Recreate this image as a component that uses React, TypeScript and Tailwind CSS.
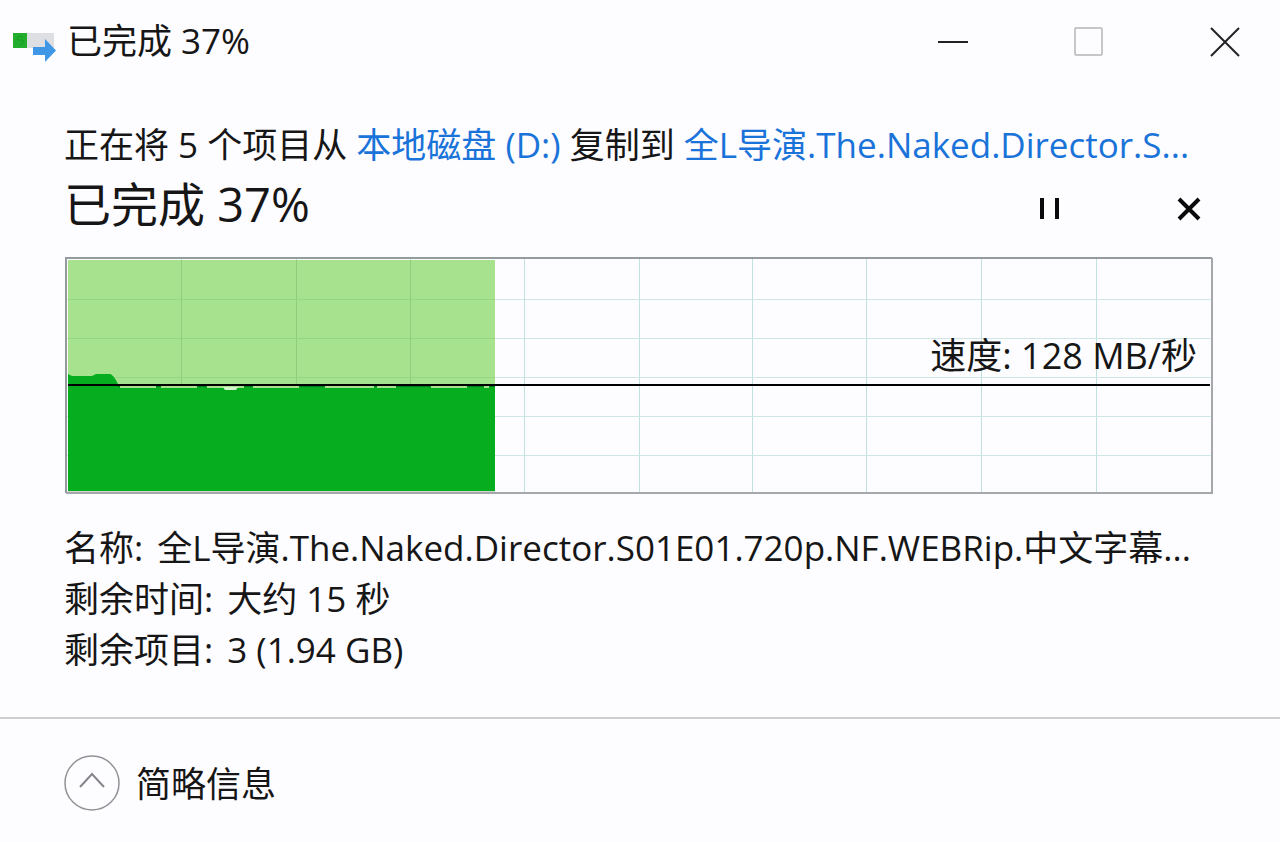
import type { ReactNode } from "react";

const VERTICALS = [117, 232, 346, 460, 575, 688, 802, 917, 1032];
const HORIZONTALS = [42, 81, 120, 159, 198];

// Stretches where the throughput dipped just below the average line.
const DIPS = [
  [55, 91],
  [96, 132],
  [142, 179],
  [188, 234],
  [260, 309],
  [312, 331],
  [366, 402],
  [419, 424],
];

function CopyIcon() {
  return (
    <svg className="h-10 w-11 shrink-0" viewBox="0 0 44 40" aria-hidden="true">
      <rect x="1" y="11" width="41" height="15" fill="#dddfe2" />
      <rect x="1" y="11" width="14" height="15" fill="#22ad2c" />
      <path d="M11 15l-4-1-2 3 2 1h4v3l-3 2" fill="none" stroke="#149a22" />
      <path d="M21 25h12v-8l11 11.500L33 40v-7H21z" fill="#3f97e6" />
    </svg>
  );
}

function SpeedChart() {
  return (
    <div className="relative h-[237px]">
      <svg
        className="block h-full w-full"
        viewBox="0 0 1148 237"
        preserveAspectRatio="none"
        role="img"
        aria-label="速度: 128 MB/秒"
      >
        {VERTICALS.map((x) => (
          <rect key={x} x={x - 1} y="2" width="1" height="233" fill="#c3e0e1" />
        ))}
        {HORIZONTALS.map((y) => (
          <rect key={y} x="2" y={y} width="1144" height="1" fill="#cfe6e6" />
        ))}
        <rect x="3" y="3" width="427" height="231" fill="#a7e28f" />
        {VERTICALS.slice(0, 3).map((x) => (
          <rect key={x} x={x - 1} y="3" width="1" height="124" fill="#8fcc7c" />
        ))}
        {HORIZONTALS.slice(0, 3).map((y) => (
          <rect key={y} x="3" y={y} width="427" height="1" fill="#96d582" />
        ))}
        <path d="M3 117l4 2h20l4-2h14q3 0 8 10v2h377v105H3z" fill="#06ad1e" />
        <rect x="53" y="129" width="377" height="1" fill="#057a1a" />
        {DIPS.map(([from, to]) => (
          <rect key={from} x={from} y="129" width={to - from} height="2" fill="#a7e28f" />
        ))}
        <path d="M158 130h15l-2 3h-11z" fill="#d6f4cb" />
        <rect x="3" y="127" width="1142" height="2" fill="#000" />
        <rect x="2" y="234" width="428" height="2" fill="#d0d5d0" />
        <path d="M1 236V1H1147" fill="none" stroke="#949b9e" strokeWidth="2" />
        <path d="M1 236H1147V1" fill="none" stroke="#a5a8aa" strokeWidth="2" />
      </svg>
      <p className="absolute right-4 bottom-[113px] text-[36px]">速度: 128 MB/秒</p>
    </div>
  );
}

function Detail({ label, children }: { label: string; children: ReactNode }) {
  return (
    <div className="flex gap-[14px]">
      <dt className="shrink-0">{label}:</dt>
      <dd className="min-w-0 truncate">{children}</dd>
    </div>
  );
}

export default function App() {
  return (
    <main className="min-h-screen bg-[#fdfcff] font-['Open_Sans','Noto_Sans_CJK_SC',sans-serif] text-[35px] leading-[51px] text-[#161616]">
      <header className="flex h-[84px] items-center pr-10 pl-3">
        <CopyIcon />
        <h1 className="ml-[11px] flex-1 pb-1">已完成 37%</h1>
        <div className="flex gap-[106px]">
          <button type="button" aria-label="最小化">
            <svg className="h-[30px] w-[30px]" viewBox="0 0 30 30">
              <path d="M0 15h30" stroke="#222" strokeWidth="2" />
            </svg>
          </button>
          <button type="button" aria-label="最大化">
            <svg className="h-[30px] w-[30px]" viewBox="0 0 30 30" fill="none">
              <rect x="1" y="1" width="27" height="27" rx="1" stroke="#b5b5b8" strokeWidth="1.500" />
            </svg>
          </button>
          <button type="button" aria-label="关闭">
            <svg className="h-[30px] w-[30px]" viewBox="0 0 30 30">
              <path d="M1 1l28 28M29 1L1 29" stroke="#222" strokeWidth="2" />
            </svg>
          </button>
        </div>
      </header>

      <section className="pt-[35px] pr-[67px] pl-16">
        <p className="truncate">
          正在将 5 个项目从{" "}
          <a href="#source" className="text-[#1a73d9]">本地磁盘 (D:)</a>{" "}
          复制到{" "}
          <a href="#target" className="text-[#1a73d9]">全L导演.The.Naked.Director.S...</a>
        </p>
        <div className="flex h-[71px] items-start pr-3">
          <h2 className="flex-1 text-[47px] leading-[68px]">已完成 37%</h2>
          <div className="flex gap-[116px] pt-[27px]">
            <button type="button" aria-label="暂停">
              <svg className="h-6 w-6" viewBox="0 0 24 24">
                <path d="M3 1h4v21H3zM18 1h4v21h-4z" fill="#0a0a0a" />
              </svg>
            </button>
            <button type="button" aria-label="取消">
              <svg className="h-6 w-6" viewBox="0 0 24 24">
                <path d="M2 2l20 20M22 2L2 22" stroke="#0a0a0a" strokeWidth="4" />
              </svg>
            </button>
          </div>
        </div>
        <div className="mt-4 pl-px">
          <SpeedChart />
        </div>
        <dl className="-mr-3 mt-7">
          <Detail label="名称">全L导演.The.Naked.Director.S01E01.720p.NF.WEBRip.中文字幕...</Detail>
          <Detail label="剩余时间">大约 15 秒</Detail>
          <Detail label="剩余项目">3 (1.94 GB)</Detail>
        </dl>
      </section>

      <footer className="mt-[42px] border-t-2 border-[#cfcfd1] pt-9 pr-[67px] pb-6 pl-16">
        <button type="button" className="flex items-center gap-4">
          <svg className="h-14 w-14" viewBox="0 0 56 56" fill="none" aria-hidden="true">
            <circle cx="28" cy="28" r="27" stroke="#929297" strokeWidth="1.500" />
            <path d="M16 32l12-13 12 13" stroke="#85858b" strokeWidth="2" />
          </svg>
          <span>简略信息</span>
        </button>
      </footer>
    </main>
  );
}
